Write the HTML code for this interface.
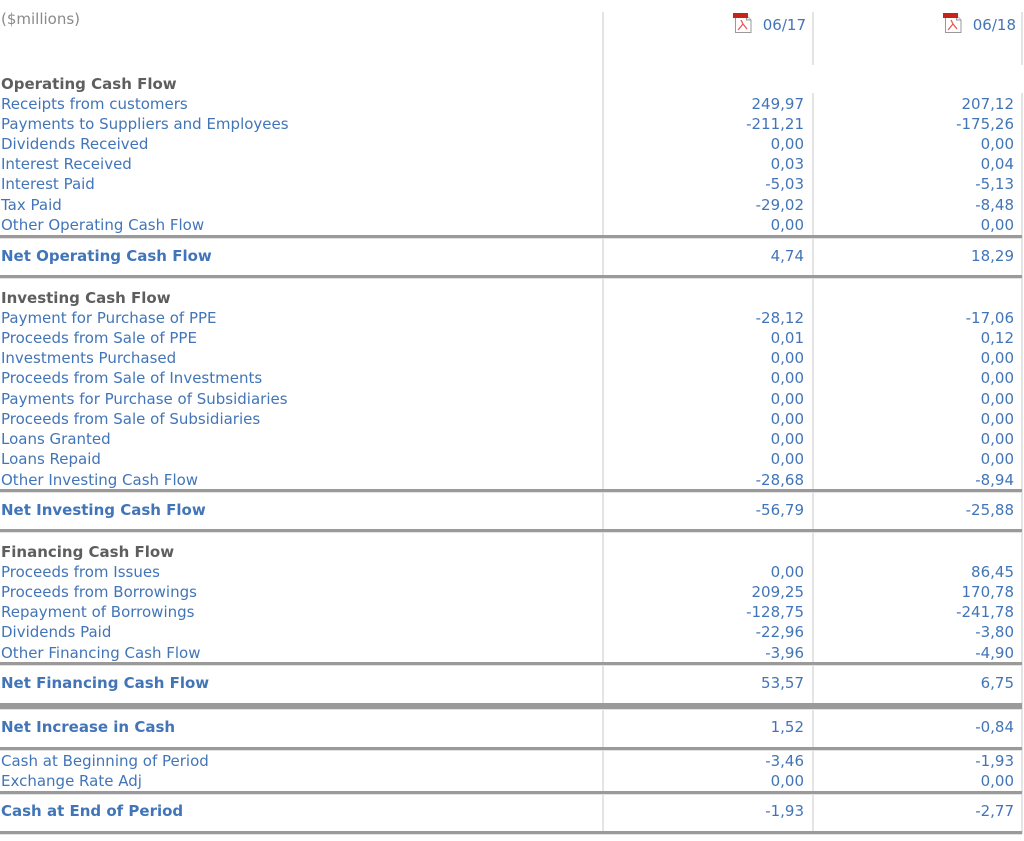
<!DOCTYPE html>
<html><head><meta charset="utf-8"><style>
body{margin:0;width:1024px;height:841px;background:#fff;position:relative;overflow:hidden;font-family:"DejaVu Sans",sans-serif;font-size:15px;}
.r{position:absolute;left:0;width:1022px;height:20px;line-height:20px;color:#4275b8;}
.r span{position:absolute;top:1px;white-space:nowrap}
.l{left:1px}
.a{right:218px}
.b{right:8px}
.h{color:#5e5e5e;font-weight:bold}
.t{font-weight:bold}
.hl{position:absolute;left:0;width:1022px;height:3px;background:#9a9a9a;border-bottom:1px solid #e2e2e2}
.vl{position:absolute;width:2px;background:#e4e4e4}
.hd{position:absolute;top:14px;height:22px;line-height:22px;color:#4275b8;font-size:15px}
</style></head><body>
<div class="vl" style="left:602px;top:12px;height:822px"></div>
<div class="vl" style="left:812px;top:12px;height:53px"></div>
<div class="vl" style="left:812px;top:93px;height:741px"></div>
<div class="vl" style="left:1021px;top:12px;height:53px"></div>
<div class="vl" style="left:1021px;top:93px;height:741px"></div>
<div style="position:absolute;left:1px;top:10px;color:#8a8a8a;">($millions)</div>
<svg style="position:absolute;left:733px;top:12px" width="20" height="22" viewBox="0 0 20 22"><path d="M2.5 3.5h11l4.5 4.5v12.5h-15.5z" fill="#fff" stroke="#999"/><path d="M13.5 3.5v4.5h4.5" fill="#eee" stroke="#999"/><rect x="0" y="1" width="15" height="5" fill="#c8231b"/><path d="M5 18l5-6 4 5M10 12l-2-4" stroke="#e55" fill="none" stroke-width="1.3"/></svg>
<div class="hd" style="right:218px">06/17</div>
<svg style="position:absolute;left:943px;top:12px" width="20" height="22" viewBox="0 0 20 22"><path d="M2.5 3.5h11l4.5 4.5v12.5h-15.5z" fill="#fff" stroke="#999"/><path d="M13.5 3.5v4.5h4.5" fill="#eee" stroke="#999"/><rect x="0" y="1" width="15" height="5" fill="#c8231b"/><path d="M5 18l5-6 4 5M10 12l-2-4" stroke="#e55" fill="none" stroke-width="1.3"/></svg>
<div class="hd" style="right:8px">06/18</div>

<div class="r h" style="top:73px"><span class="l">Operating Cash Flow</span></div>
<div class="r" style="top:93px"><span class="l">Receipts from customers</span><span class="a">249,97</span><span class="b">207,12</span></div>
<div class="r" style="top:113px"><span class="l">Payments to Suppliers and Employees</span><span class="a">-211,21</span><span class="b">-175,26</span></div>
<div class="r" style="top:133px"><span class="l">Dividends Received</span><span class="a">0,00</span><span class="b">0,00</span></div>
<div class="r" style="top:153px"><span class="l">Interest Received</span><span class="a">0,03</span><span class="b">0,04</span></div>
<div class="r" style="top:173px"><span class="l">Interest Paid</span><span class="a">-5,03</span><span class="b">-5,13</span></div>
<div class="r" style="top:194px"><span class="l">Tax Paid</span><span class="a">-29,02</span><span class="b">-8,48</span></div>
<div class="r" style="top:214px"><span class="l">Other Operating Cash Flow</span><span class="a">0,00</span><span class="b">0,00</span></div>
<div class="hl" style="top:235px"></div>
<div class="r t" style="top:245px"><span class="l">Net Operating Cash Flow</span><span class="a" style="font-weight:normal">4,74</span><span class="b" style="font-weight:normal">18,29</span></div>
<div class="hl" style="top:275px"></div>

<div class="r h" style="top:287px"><span class="l">Investing Cash Flow</span></div>
<div class="r" style="top:307px"><span class="l">Payment for Purchase of PPE</span><span class="a">-28,12</span><span class="b">-17,06</span></div>
<div class="r" style="top:327px"><span class="l">Proceeds from Sale of PPE</span><span class="a">0,01</span><span class="b">0,12</span></div>
<div class="r" style="top:347px"><span class="l">Investments Purchased</span><span class="a">0,00</span><span class="b">0,00</span></div>
<div class="r" style="top:367px"><span class="l">Proceeds from Sale of Investments</span><span class="a">0,00</span><span class="b">0,00</span></div>
<div class="r" style="top:388px"><span class="l">Payments for Purchase of Subsidiaries</span><span class="a">0,00</span><span class="b">0,00</span></div>
<div class="r" style="top:408px"><span class="l">Proceeds from Sale of Subsidiaries</span><span class="a">0,00</span><span class="b">0,00</span></div>
<div class="r" style="top:428px"><span class="l">Loans Granted</span><span class="a">0,00</span><span class="b">0,00</span></div>
<div class="r" style="top:448px"><span class="l">Loans Repaid</span><span class="a">0,00</span><span class="b">0,00</span></div>
<div class="r" style="top:469px"><span class="l">Other Investing Cash Flow</span><span class="a">-28,68</span><span class="b">-8,94</span></div>
<div class="hl" style="top:489px"></div>
<div class="r t" style="top:499px"><span class="l">Net Investing Cash Flow</span><span class="a" style="font-weight:normal">-56,79</span><span class="b" style="font-weight:normal">-25,88</span></div>
<div class="hl" style="top:529px"></div>

<div class="r h" style="top:541px"><span class="l">Financing Cash Flow</span></div>
<div class="r" style="top:561px"><span class="l">Proceeds from Issues</span><span class="a">0,00</span><span class="b">86,45</span></div>
<div class="r" style="top:581px"><span class="l">Proceeds from Borrowings</span><span class="a">209,25</span><span class="b">170,78</span></div>
<div class="r" style="top:601px"><span class="l">Repayment of Borrowings</span><span class="a">-128,75</span><span class="b">-241,78</span></div>
<div class="r" style="top:621px"><span class="l">Dividends Paid</span><span class="a">-22,96</span><span class="b">-3,80</span></div>
<div class="r" style="top:642px"><span class="l">Other Financing Cash Flow</span><span class="a">-3,96</span><span class="b">-4,90</span></div>
<div class="hl" style="top:662px"></div>
<div class="r t" style="top:672px"><span class="l">Net Financing Cash Flow</span><span class="a" style="font-weight:normal">53,57</span><span class="b" style="font-weight:normal">6,75</span></div>
<div class="hl" style="top:703px;height:6px"></div>
<div class="r t" style="top:716px"><span class="l">Net Increase in Cash</span><span class="a" style="font-weight:normal">1,52</span><span class="b" style="font-weight:normal">-0,84</span></div>
<div class="hl" style="top:747px"></div>
<div class="r" style="top:750px"><span class="l">Cash at Beginning of Period</span><span class="a">-3,46</span><span class="b">-1,93</span></div>
<div class="r" style="top:770px"><span class="l">Exchange Rate Adj</span><span class="a">0,00</span><span class="b">0,00</span></div>
<div class="hl" style="top:791px"></div>
<div class="r t" style="top:800px"><span class="l">Cash at End of Period</span><span class="a" style="font-weight:normal">-1,93</span><span class="b" style="font-weight:normal">-2,77</span></div>
<div class="hl" style="top:831px"></div>
</body></html>
